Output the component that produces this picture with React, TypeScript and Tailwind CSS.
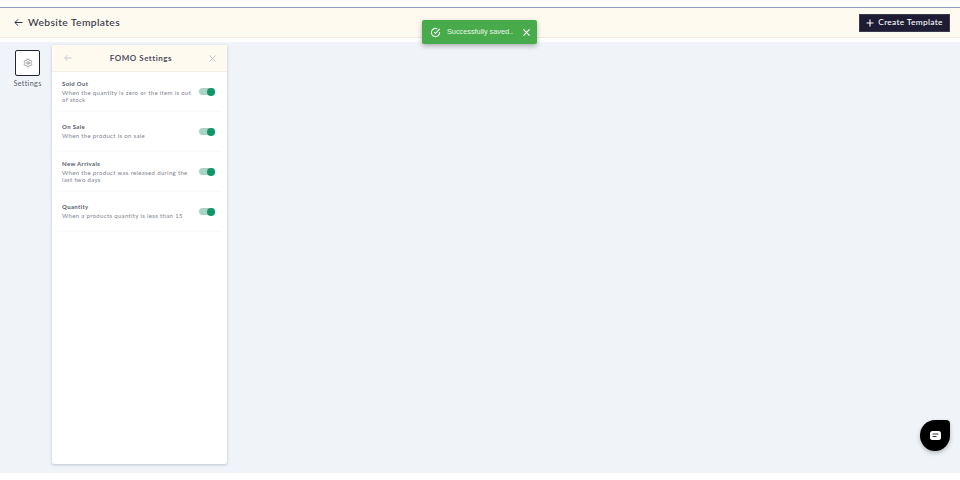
import React from "react";
import { Settings } from "lucide-react";

const rows = [
  { t: "Sold Out", d: "When the quantity is zero or the item is out of stock" },
  { t: "On Sale", d: "When the product is on sale" },
  { t: "New Arrivals", d: "When the product was released during the last two days" },
  { t: "Quantity", d: "When a products quantity is less than 15" },
];

function Toggle() {
  return (
    <div className="relative w-[16px] h-[7px] rounded-full bg-[#a9d3c2] shrink-0">
      <div className="absolute right-0 top-[-0.5px] w-[8px] h-[8px] rounded-full bg-[#12956b]" />
    </div>
  );
}

export default function App() {
  return (
    <div className="relative w-[960px] h-[480px] bg-white overflow-hidden font-['Lato','Noto_Sans',sans-serif] text-[#3a3d4d]">
      <div className="h-[7px] bg-white" />
      <div className="h-px bg-[#8e9cc4]" />
      <header className="h-[30px] bg-[#fffaf0] border-b border-[#f0ede4] flex items-center justify-between pl-[14px] pr-[10px]">
        <div className="flex items-center gap-[5px]">
          <svg width="9" height="9" viewBox="0 0 10 10" fill="none" stroke="#2f3142" strokeWidth="1.1">
            <path d="M9.5 5H1M4.5 1.5 1 5l3.5 3.5" />
          </svg>
          <span className="text-[10.3px] font-medium tracking-[0.38px] text-[#30323f]">Website Templates</span>
        </div>
        <button className="w-[91px] h-[18px] bg-[#1d1c34] border border-[#3a3a4c] flex items-center justify-center gap-[4px] text-white text-[8.4px] font-medium tracking-[0.3px]">
          <svg width="8" height="8" viewBox="0 0 8 8" stroke="#fff" strokeWidth="1.1">
            <path d="M4 .5v7M.5 4h7" />
          </svg>
          Create Template
        </button>
      </header>
      <div className="h-[4px] bg-white" />
      <main className="h-[431px] bg-[#f0f4f8] flex pl-[3px] pt-[3px]">
        <div className="w-[49px] flex flex-col items-center pt-[5px]">
          <div className="w-[25px] h-[26px] bg-white border border-[#23242f] rounded-[2px] flex items-center justify-center">
            <Settings size={10} strokeWidth={1.4} color="#666" />
          </div>
          <span className="mt-[3px] text-[7.2px] tracking-[0.35px] text-[#5a5d6b]">Settings</span>
        </div>
        <section className="w-[175px] h-[419px] bg-white rounded-[2px] shadow-[0_1px_3px_rgba(120,135,160,0.45)] flex flex-col">
          <div className="h-[27px] bg-[#fffaf0] border-b border-[#f3efe6] flex items-center justify-between pl-[12px] pr-[11px] rounded-t-[2px]">
            <svg width="8" height="8" viewBox="0 0 10 10" fill="none" stroke="#b9bcc4" strokeWidth="1">
              <path d="M9.5 5H1M4.5 1.5 1 5l3.5 3.5" />
            </svg>
            <span className="ml-[1px] text-[8px] font-bold tracking-[0.5px] text-[#4b4e5c]">FOMO Settings</span>
            <svg width="7" height="7" viewBox="0 0 8 8" stroke="#b5b8bf" strokeWidth="0.9">
              <path d="M.5.5l7 7M7.5.5l-7 7" />
            </svg>
          </div>
          <div className="px-[5px] flex flex-col">
            {rows.map((r) => (
              <div key={r.t} className="h-[40px] flex items-center justify-between border-b border-[#f9f9fa] pl-[5px] pr-[7px]">
                <div className="w-[134px]">
                  <div className="text-[6px] leading-[8px] font-bold tracking-[0.35px] text-[#585b68]">{r.t}</div>
                  <div className="mt-[1px] text-[6px] leading-[7.5px] tracking-[0.34px] text-[#80838d]">{r.d}</div>
                </div>
                <Toggle />
              </div>
            ))}
          </div>
        </section>
      </main>
      <div className="absolute left-[422px] top-[20px] w-[115px] h-[24px] bg-[#47ab4c] rounded-[2px] shadow-[0_2px_5px_rgba(0,0,0,0.3)] flex items-center pl-[8px] pr-[7px] text-white font-['Liberation_Sans',sans-serif]">
        <svg width="11" height="11" viewBox="0 0 24 24" fill="none" stroke="#fff" strokeWidth="2.2">
          <path d="M21 11v1a9 9 0 1 1-5.3-8.2" />
          <path d="M21 4 12 14l-3-3" />
        </svg>
        <span className="ml-[6px] text-[7.3px] text-[#eaf6ea] flex-1 whitespace-nowrap">Successfully saved..</span>
        <svg width="7" height="7" viewBox="0 0 8 8" stroke="#fff" strokeWidth="1.4">
          <path d="M.5.5l7 7M7.5.5l-7 7" />
        </svg>
      </div>
      <div className="absolute left-[920px] top-[420px] w-[30px] h-[31px] bg-black rounded-[50%_4px_50%_50%] shadow-[0_2px_4px_rgba(0,0,0,0.25)] flex items-center justify-center">
        <svg width="11" height="9" viewBox="0 0 11 9">
          <rect width="11" height="9" rx="2.5" fill="#fff" />
          <path d="M2.5 3h6M2.5 5.5h4" stroke="#222" strokeWidth="0.9" />
        </svg>
      </div>
    </div>
  );
}
